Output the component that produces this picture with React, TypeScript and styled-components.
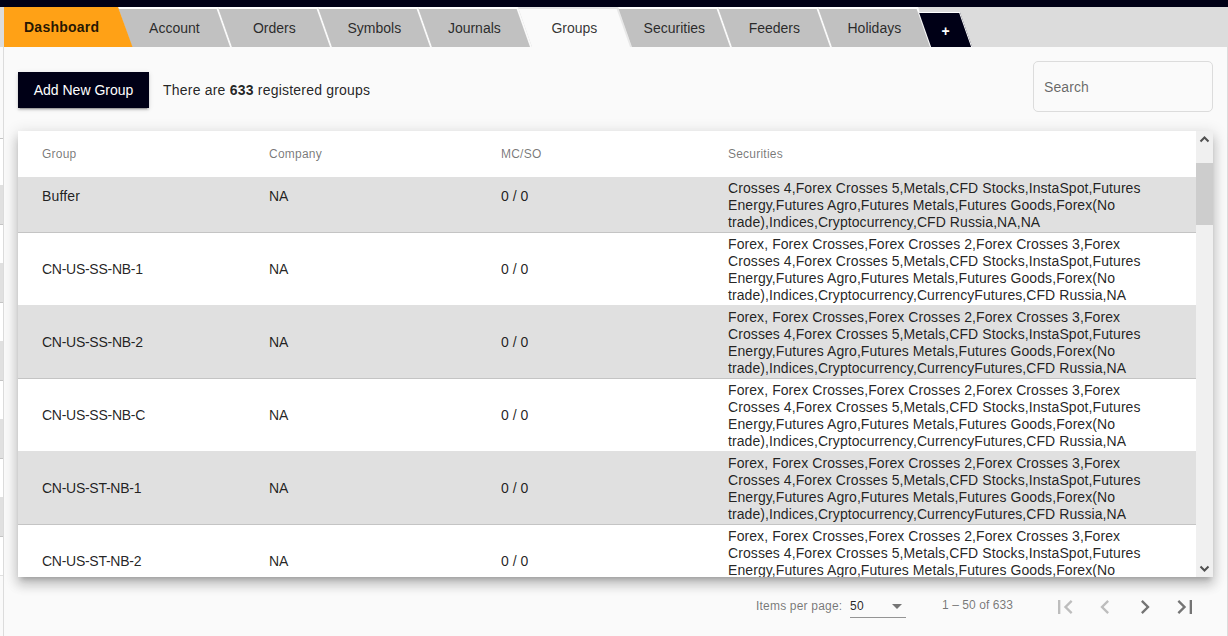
import React from 'react';
import styled, { createGlobalStyle } from 'styled-components';

const GlobalStyle = createGlobalStyle`
  * { box-sizing: border-box; }
  body {
    margin: 0;
    overflow: hidden;
    background: #fafafa;
    color: rgba(0, 0, 0, 0.87);
    font: 14px/17px "Liberation Sans", Arial, sans-serif;
  }
`;

const Page = styled.div`
  display: flex;
  flex-direction: column;
  height: 636px;
`;

const TopBar = styled.div`
  flex: none;
  height: 7px;
  background: #000016;
`;

const TabStrip = styled.nav`
  flex: none;
  display: flex;
  align-items: flex-end;
  height: 40px;
  padding-left: 4px;
  background: #dcdcdc;
`;

const DashboardTab = styled.div`
  position: relative;
  z-index: 1;
  width: 129px;
  height: 40px;
  margin-right: -8px;
  padding-left: 20px;
  background: #ffa116;
  clip-path: polygon(0 0, 114px 0, 128.5px 100%, 0 100%);
  font-weight: bold;
  line-height: 40px;
  letter-spacing: 0.25px;
`;

const Tab = styled.div<{ $active?: boolean }>`
  width: 100px;
  height: 40px;
  transform: skewX(19.4deg);
  border-top: 2px solid ${(p) => (p.$active ? '#e4e4e6' : '#fff')};
  border-right: 2px solid ${(p) => (p.$active ? '#e8e8e8' : '#fafafa')};
  background: ${(p) => (p.$active ? '#fafafa' : '#c1c1c1')};
  color: rgba(0, 0, 0, 0.8);
  text-align: center;
  line-height: 38px;
`;

const AddTab = styled.div`
  width: 41px;
  height: 35px;
  transform: skewX(19.4deg);
  border-top: 1px solid #fff;
  border-right: 1px solid #fff;
  background: #000016;
  color: #fff;
  font-weight: bold;
  text-align: center;
  line-height: 36px;
`;

const TabLabel = styled.span`
  display: block;
  transform: skewX(-19.4deg);
`;

const Body = styled.div`
  flex: 1;
  display: flex;
  min-height: 0;
`;

const BackgroundList = styled.div`
  flex: none;
  width: 3px;
  padding-top: 91px;
`;

const BackgroundRow = styled.div<{ $shaded?: boolean; $first?: boolean }>`
  height: ${(p) => (p.$first ? 48 : 39)}px;
  border-top: ${(p) => (p.$first ? '1px solid #c5c5c5' : 'none')};
  border-bottom: 1px solid rgba(0, 0, 0, 0.12);
  background: ${(p) => (p.$shaded ? '#e0e0e0' : '#fff')};
`;

const Panel = styled.main`
  flex: 1;
  min-width: 0;
  border: solid #dcdcdc;
  border-width: 0 1px;
  padding: 14px 14px 0;
`;

const Toolbar = styled.div`
  display: flex;
  align-items: flex-start;
  height: 70px;
`;

const AddButton = styled.button`
  width: 131px;
  height: 36px;
  margin-top: 11px;
  border: 0;
  padding: 0;
  background: #000016;
  color: #fff;
  font: inherit;
  box-shadow: 0 3px 1px -2px rgba(0, 0, 0, 0.2), 0 2px 2px rgba(0, 0, 0, 0.14), 0 1px 5px rgba(0, 0, 0, 0.12);
`;

const Summary = styled.p`
  margin: 21px auto 0 14px;
  letter-spacing: 0.21px;
`;

const SearchField = styled.div`
  width: 180px;
  height: 51px;
  padding: 17px 10px;
  border: 1px solid #dcdcdc;
  border-radius: 5px;
  color: rgba(0, 0, 0, 0.6);
  letter-spacing: 0.1px;
`;

const TableBox = styled.section`
  display: flex;
  width: 1195px;
  height: 446px;
  overflow: hidden;
`;

const TableShadow = styled.div`
  width: 1195px;
  box-shadow: 0 5px 5px -3px rgba(0, 0, 0, 0.2), 0 8px 10px 1px rgba(0, 0, 0, 0.14), 0 3px 14px 2px rgba(0, 0, 0, 0.12);
`;

const TableContent = styled.div`
  flex: 1;
  background: #fff;
`;

const columns = `
  display: grid;
  grid-template-columns: 227px 232px 227px 444px;
  align-items: center;
  padding-left: 24px;
`;

const HeaderRow = styled.div`
  ${columns}
  position: relative;
  z-index: 1;
  height: 46px;
  background: #fff;
  color: rgba(0, 0, 0, 0.54);
  font-size: 12px;
  letter-spacing: 0.22px;
`;

const Rows = styled.div`
  margin-top: -17px;
`;

const Row = styled.div<{ $shaded: boolean }>`
  ${columns}
  height: 73px;
  border-bottom: 1px solid rgba(0, 0, 0, 0.12);
  background: ${(p) => (p.$shaded ? '#e0e0e0' : '#fff')};
`;

const Name = styled.span<{ $code: boolean }>`
  letter-spacing: ${(p) => (p.$code ? '-0.27px' : '0.15px')};
`;

const Securities = styled.span`
  align-self: end;
  padding-bottom: 1px;
  letter-spacing: 0.08px;
`;

const Scrollbar = styled.div`
  display: flex;
  flex-direction: column;
  width: 17px;
  background: #f0f0f0;
`;

const ScrollThumb = styled.div`
  height: 62px;
  margin: 15px 0 auto;
  background: #cdcdcd;
`;

const ScrollArrow = styled.svg`
  display: block;
  width: 17px;
  height: 17px;
  fill: none;
  stroke: #505050;
  stroke-width: 2;
`;

const Paginator = styled.footer`
  display: flex;
  align-items: center;
  height: 58px;
  padding-left: 738px;
  color: rgba(0, 0, 0, 0.54);
  font-size: 12px;
  white-space: nowrap;
`;

const PageLabel = styled.span`
  width: 94px;
  letter-spacing: 0.2px;
`;

const PageSize = styled.div`
  display: flex;
  align-items: center;
  justify-content: space-between;
  width: 56px;
  height: 25px;
  padding: 2px 4px 0 0;
  margin-top: -1px;
  border-bottom: 1px solid #949494;
  color: rgba(0, 0, 0, 0.87);
  letter-spacing: 0.3px;
`;

const Caret = styled.svg`
  width: 10px;
  height: 5px;
  fill: #757575;
`;

const PageRange = styled.span`
  width: 103px;
  margin: -2px 0 0 36px;
  letter-spacing: 0.07px;
`;

const PageButton = styled.button<{ $disabled?: boolean }>`
  display: flex;
  align-items: center;
  justify-content: center;
  width: 40px;
  height: 40px;
  margin-top: 1px;
  border: 0;
  padding: 0;
  background: none;
  color: ${(p) => (p.$disabled ? '#bdbdbd' : '#747474')};
`;

const PageIcon = styled.svg`
  width: 28px;
  height: 28px;
  fill: currentColor;
`;

const SHORT =
  'Crosses 4,Forex Crosses 5,Metals,CFD Stocks,InstaSpot,Futures Energy,Futures Agro,Futures Metals,Futures Goods,Forex(No trade),Indices,Cryptocurrency,CFD Russia,NA,NA';
const FULL =
  'Forex, Forex Crosses,Forex Crosses 2,Forex Crosses 3,Forex Crosses 4,Forex Crosses 5,Metals,CFD Stocks,InstaSpot,Futures Energy,Futures Agro,Futures Metals,Futures Goods,Forex(No trade),Indices,Cryptocurrency,CurrencyFutures,CFD Russia,NA';

const groups = [
  { name: 'Buffer', securities: SHORT },
  { name: 'CN-US-SS-NB-1', securities: FULL },
  { name: 'CN-US-SS-NB-2', securities: FULL },
  { name: 'CN-US-SS-NB-C', securities: FULL },
  { name: 'CN-US-ST-NB-1', securities: FULL },
  { name: 'CN-US-ST-NB-2', securities: FULL },
];

const tabs = ['Account', 'Orders', 'Symbols', 'Journals', 'Groups', 'Securities', 'Feeders', 'Holidays'];

const pageButtons = [
  { label: 'First page', disabled: true, d: 'M18.41 16.59L13.82 12l4.59-4.59L17 6l-6 6 6 6zM6 6h2v12H6z' },
  { label: 'Previous page', disabled: true, d: 'M15.41 7.41L14 6l-6 6 6 6 1.41-1.41L10.83 12z' },
  { label: 'Next page', disabled: false, d: 'M10 6L8.59 7.41 13.17 12l-4.58 4.59L10 18l6-6z' },
  { label: 'Last page', disabled: false, d: 'M5.59 7.41L10.18 12l-4.59 4.59L7 18l6-6-6-6zM16 6h2v12h-2z' },
];

export default function App() {
  return (
    <Page>
      <GlobalStyle />
      <TopBar />
      <TabStrip>
        <DashboardTab>Dashboard</DashboardTab>
        {tabs.map((tab) => (
          <Tab key={tab} $active={tab === 'Groups'}>
            <TabLabel>{tab}</TabLabel>
          </Tab>
        ))}
        <AddTab>
          <TabLabel>+</TabLabel>
        </AddTab>
      </TabStrip>
      <Body>
        <BackgroundList>
          <BackgroundRow $first />
          {Array.from({ length: 10 }, (_, i) => (
            <BackgroundRow key={i} $shaded={i % 2 === 0} />
          ))}
        </BackgroundList>
        <Panel>
          <Toolbar>
            <AddButton>Add New Group</AddButton>
            <Summary>
              There are <b>633</b> registered groups
            </Summary>
            <SearchField>Search</SearchField>
          </Toolbar>
          <TableShadow>
            <TableBox>
              <TableContent>
                <HeaderRow>
                  <span>Group</span>
                  <span>Company</span>
                  <span>MC/SO</span>
                  <span>Securities</span>
                </HeaderRow>
                <Rows>
                  {groups.map((group, i) => (
                    <Row key={group.name} $shaded={i % 2 === 0}>
                      <Name $code={group.name.includes('-')}>{group.name}</Name>
                      <span>NA</span>
                      <span>0 / 0</span>
                      <Securities>{group.securities}</Securities>
                    </Row>
                  ))}
                </Rows>
              </TableContent>
              <Scrollbar>
                <ScrollArrow viewBox="0 0 17 17">
                  <path d="M4.5 10.5l4-4 4 4" />
                </ScrollArrow>
                <ScrollThumb />
                <ScrollArrow viewBox="0 0 17 17">
                  <path d="M4.5 6.5l4 4 4-4" />
                </ScrollArrow>
              </Scrollbar>
            </TableBox>
          </TableShadow>
          <Paginator>
            <PageLabel>Items per page:</PageLabel>
            <PageSize>
              50
              <Caret viewBox="0 0 10 5">
                <path d="M0 0h10L5 5z" />
              </Caret>
            </PageSize>
            <PageRange>1 – 50 of 633</PageRange>
            {pageButtons.map((button) => (
              <PageButton key={button.label} $disabled={button.disabled} aria-label={button.label}>
                <PageIcon viewBox="0 0 24 24">
                  <path d={button.d} />
                </PageIcon>
              </PageButton>
            ))}
          </Paginator>
        </Panel>
      </Body>
    </Page>
  );
}
